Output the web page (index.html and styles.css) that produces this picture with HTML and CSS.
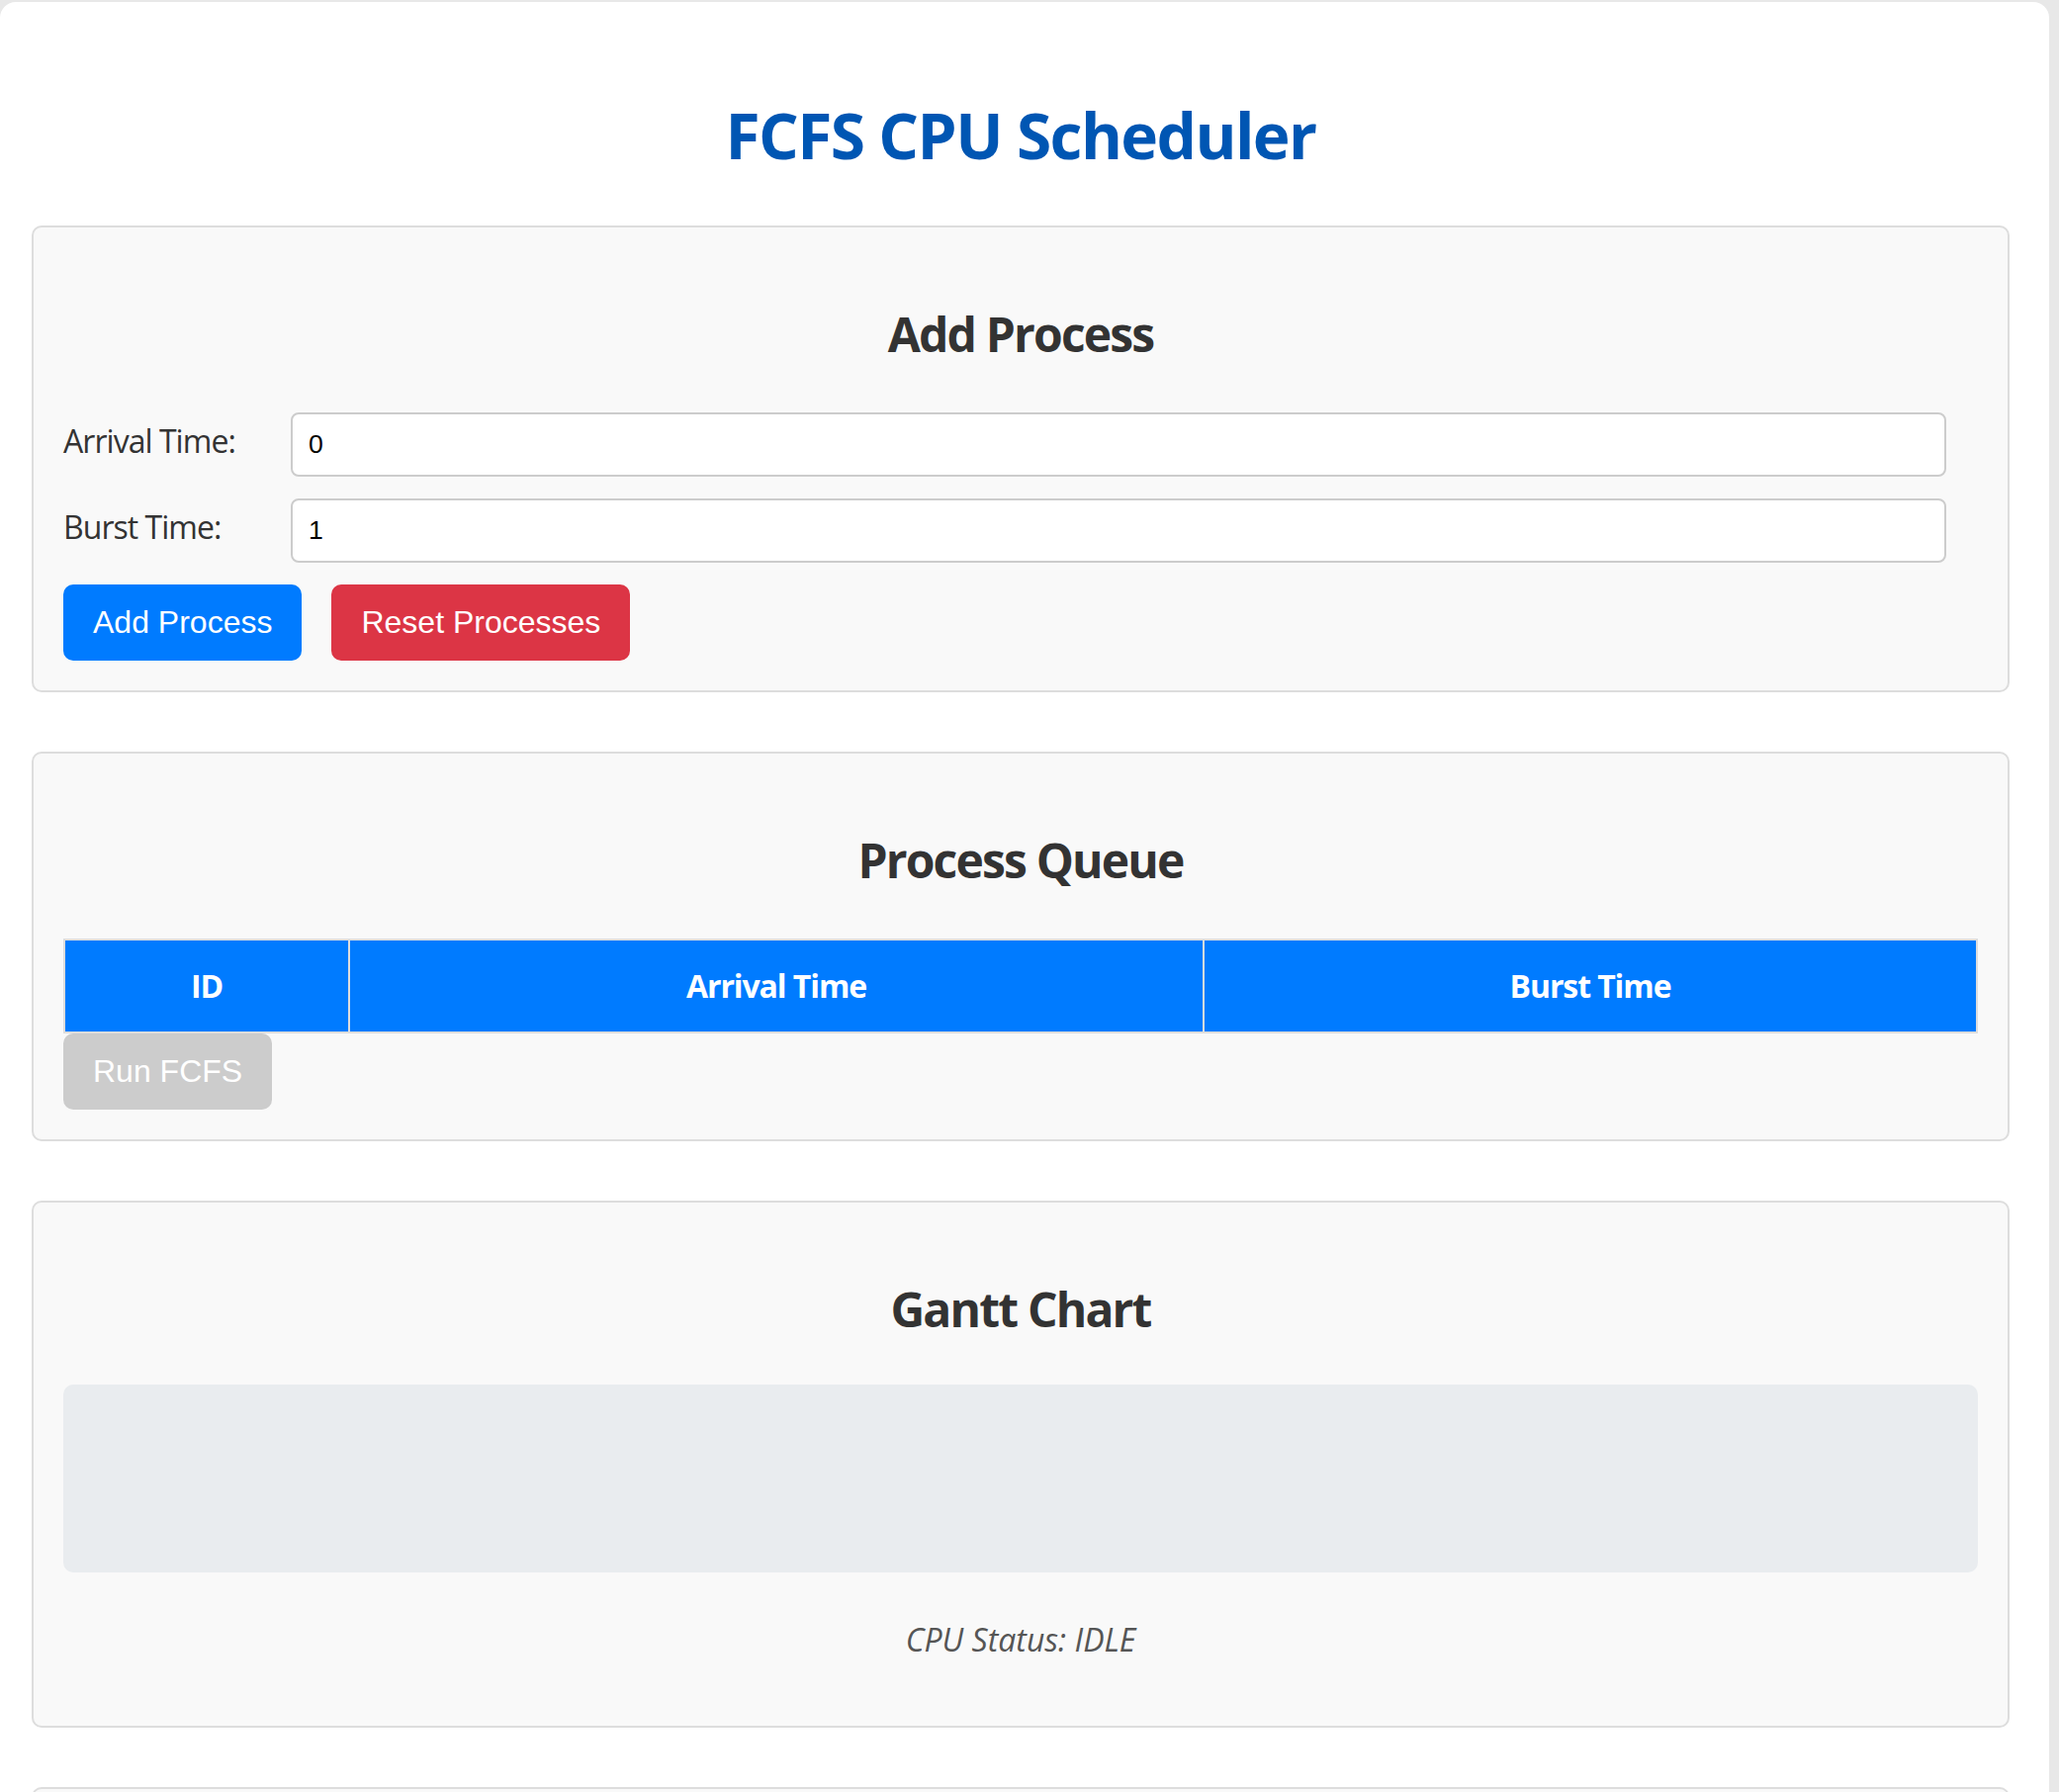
FILE: index.html
```html
<!DOCTYPE html>
<html lang="en">
<head>
<meta charset="utf-8">
<title>FCFS CPU Scheduler</title>
<link rel="stylesheet" href="styles.css">
</head>
<body>
<div class="container">
  <h1 class="title">FCFS CPU Scheduler</h1>

  <section class="card">
    <h2 class="card-title">Add Process</h2>
    <div class="form-row">
      <label class="form-label" for="arrival">Arrival Time:</label>
      <input class="form-input" id="arrival" type="number" value="0">
    </div>
    <div class="form-row">
      <label class="form-label" for="burst">Burst Time:</label>
      <input class="form-input" id="burst" type="number" value="1">
    </div>
    <div class="btn-row">
      <button class="btn btn-primary">Add Process</button>
      <button class="btn btn-danger">Reset Processes</button>
    </div>
  </section>

  <section class="card">
    <h2 class="card-title">Process Queue</h2>
    <table class="queue">
      <thead>
        <tr>
          <th class="col-id">ID</th>
          <th class="col-arrival">Arrival Time</th>
          <th class="col-burst">Burst Time</th>
        </tr>
      </thead>
      <tbody></tbody>
    </table>
    <div class="btn-row">
      <button class="btn btn-disabled" disabled>Run FCFS</button>
    </div>
  </section>

  <section class="card">
    <h2 class="card-title card-title-tight">Gantt Chart</h2>
    <div class="gantt"></div>
    <p class="status">CPU Status: IDLE</p>
  </section>

  <section class="card card-empty"></section>
</div>
</body>
</html>
```
FILE: styles.css
```css
html, body {
  margin: 0;
  padding: 0;
}
body {
  background: #e8e8e8;
  padding-top: 2px;
  font-family: "Open Sans", "Noto Sans", sans-serif;
  font-size: 32px;
  color: #333;
  height: 1810px;
  overflow: hidden;
}
.container {
  width: 2072px;
  box-sizing: border-box;
  background: #fff;
  border-radius: 16px 16px 0 0;
  padding: 91px 40px 0 32px;
  min-height: 1810px;
}
.title {
  margin: 0 0 47px;
  font-size: 64px;
  line-height: 88px;
  font-weight: 700;
  color: #0056b3;
  text-align: center;
  letter-spacing: -0.025em;
}
.card {
  background: #f9f9f9;
  border: 2px solid #ddd;
  border-radius: 10px;
  padding: 30px;
  margin-bottom: 60px;
}
.card-empty {
  min-height: 300px;
}
.card-title {
  margin: 46px 0 47px;
  font-size: 48px;
  line-height: 64px;
  font-weight: 700;
  color: #333;
  text-align: center;
  letter-spacing: -0.038em;
}
.card-title-tight {
  margin-bottom: 44px;
}
.form-row {
  display: grid;
  grid-template-columns: 230px 1674px;
  align-items: center;
  height: 65px;
  margin-bottom: 22px;
}
.form-label {
  font-size: 32px;
  line-height: 44px;
  color: #333;
  letter-spacing: -0.03em;
  margin-bottom: 8px;
}
.form-input {
  box-sizing: border-box;
  width: 1674px;
  height: 65px;
  margin: 0;
  padding: 0 16px;
  border: 2px solid #ccc;
  border-radius: 8px;
  background: #fff;
  font-family: "Liberation Sans", Arial, sans-serif;
  font-size: 26.67px;
  color: #000;
  outline: none;
}
.btn-row {
  display: flex;
  gap: 30px;
}
.btn {
  font-family: "Liberation Sans", Arial, sans-serif;
  font-size: 32px;
  line-height: normal;
  padding: 20px 30px;
  border: none;
  border-radius: 10px;
  color: #fff;
  margin: 0;
}
.btn-primary { background: #007bff; }
.btn-danger { background: #dc3545; }
.btn-disabled { background: #ccc; color: #fff; }
.queue {
  width: 100%;
  border-collapse: collapse;
  table-layout: fixed;
  margin: 0;
}
.queue th {
  background: #007bff;
  color: #fff;
  font-size: 32px;
  font-weight: 700;
  line-height: 44px;
  padding: 24px 0;
  border: 2px solid #ddd;
  text-align: center;
  letter-spacing: -0.034em;
}
.col-id { width: 286px; }
.col-arrival { width: 862px; }
.col-burst { width: auto; }
.gantt {
  height: 190px;
  background: #e9ecef;
  border-radius: 10px;
}
.status {
  margin: 46px 0 35px;
  font-size: 32px;
  line-height: 44px;
  font-style: italic;
  color: #555;
  text-align: center;
}
```
